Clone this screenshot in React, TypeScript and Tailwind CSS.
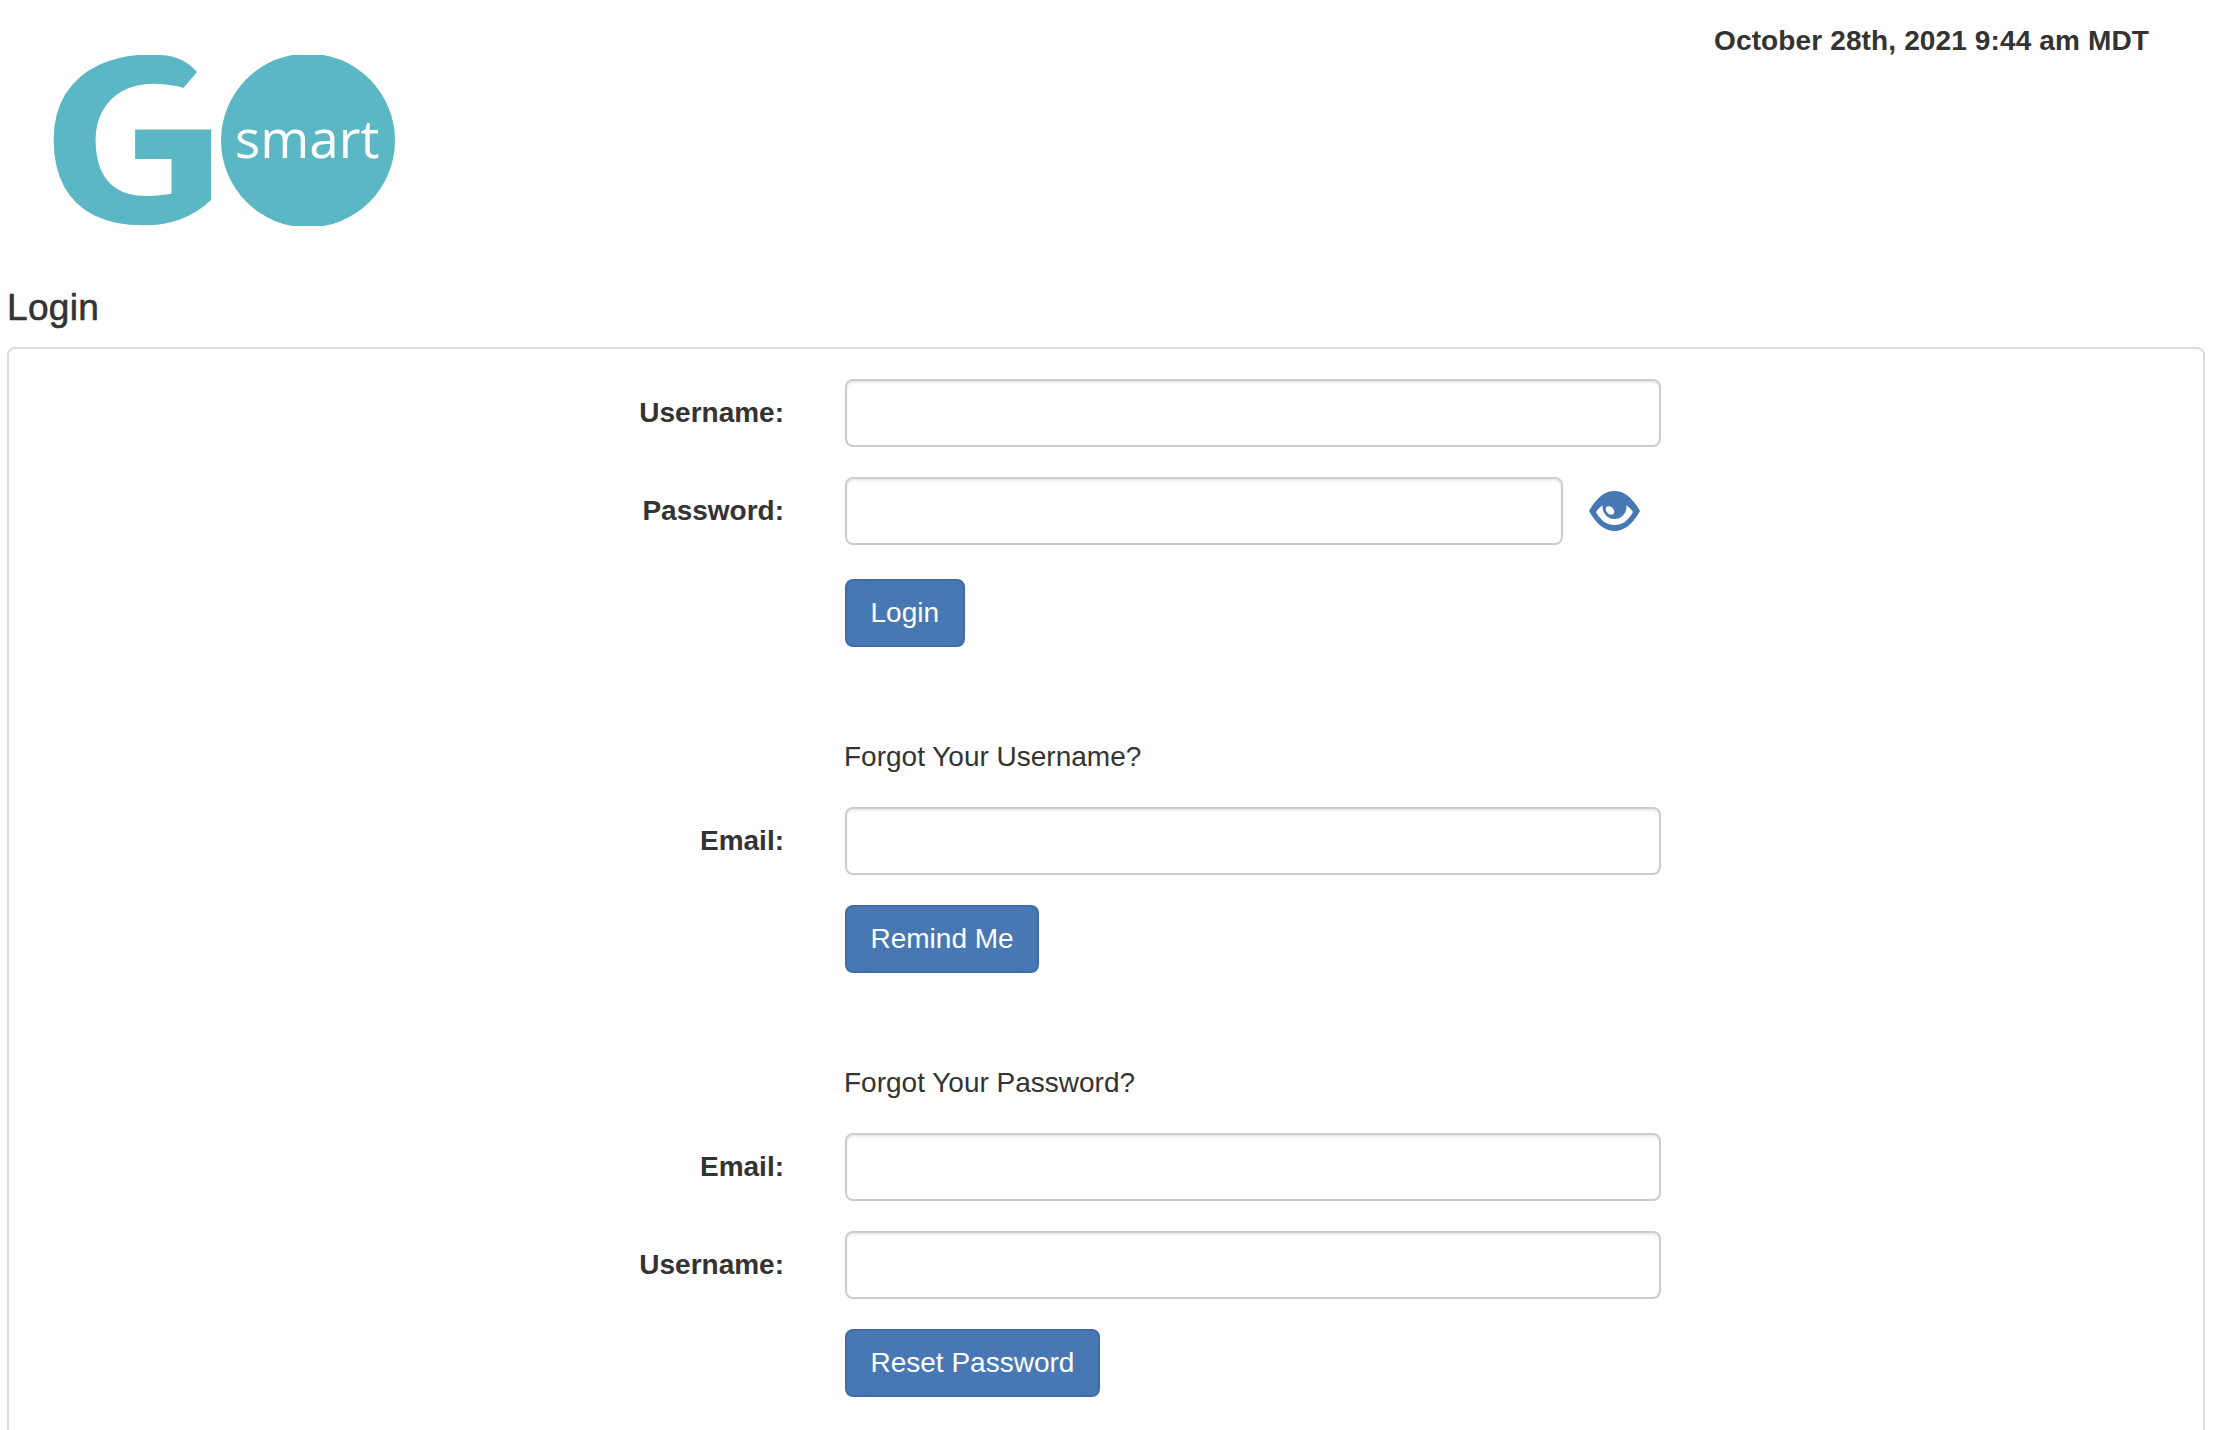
import React from 'react';

const font = { fontFamily: '"Liberation Sans", Arial, sans-serif' };

function Logo() {
  return (
    <svg width="365" height="171" viewBox="0 0 365 171" className="block">
      <defs>
        {/* trims the font's G to the logo's terminal and bottom curve */}
        <clipPath id="g-trim">
          <path d="M0 0H125Q148 0 163 17L140 44L177 60V145Q150 171 106 171H0Z" />
        </clipPath>
      </defs>
      <g clipPath="url(#g-trim)">
        <text transform="translate(4 168) scale(1.155 1)" fontFamily='"Open Sans", sans-serif' fontWeight="700" fontSize="233" fill="#5cb7c5">G</text>
      </g>
      <circle cx="274" cy="85.5" r="87" fill="#5cb7c5" />
      <text x="201" y="103" fontFamily='"Open Sans", sans-serif' fontSize="53" fill="#ffffff">smart</text>
    </svg>
  );
}

function EyeIcon() {
  return (
    <svg width="51" height="40" viewBox="0 0 51 40">
      <path d="M0 20C8 6 16 0 25.5 0S43 6 51 20C43 34 35 40 25.5 40S8 34 0 20Z" fill="#4878b4" />
      <path d="M7 21C12 14 17 11 25.5 11S39 14 44 21C39 30 33 34 25.5 34S12 30 7 21Z" fill="#ffffff" />
      <circle cx="25.5" cy="16" r="12" fill="#4878b4" />
      <ellipse cx="21" cy="19.5" rx="3.5" ry="5" transform="rotate(-45 21 19.5)" fill="#ffffff" />
    </svg>
  );
}

function Field({ label, width = 'w-[816px]', extra, mb = 'mb-[30px]' }: { label: string; width?: string; extra?: React.ReactNode; mb?: string }) {
  return (
    <div className={`flex items-center ${mb}`}>
      <label className="w-[775px] text-right text-[28px] font-bold leading-10 text-[#333]">{label}</label>
      <input className={`ml-[61px] h-[68px] ${width} rounded-lg border-2 border-[#ccc] bg-white shadow-[inset_0_2px_2px_rgba(0,0,0,0.075)] outline-none`} />
      {extra}
    </div>
  );
}

function Submit({ children, mb }: { children: React.ReactNode; mb: string }) {
  return (
    <div className={`ml-[836px] ${mb}`}>
      <button className="h-[68px] rounded-lg border-2 border-[#3f6ca8] bg-[#4878b4] px-[23.5px] text-[28px] leading-10 text-white">
        {children}
      </button>
    </div>
  );
}

function Hint({ children }: { children: React.ReactNode }) {
  return <p className="mb-[30px] ml-[835px] text-[28px] leading-10 text-[#333]">{children}</p>;
}

export default function App() {
  return (
    <div style={font} className="h-[1430px] overflow-hidden bg-white text-[#333]">
      <header className="flex items-start justify-between">
        <div className="ml-[34px] mt-[55px]">
          <Logo />
        </div>
        <div className="mr-[65px] mt-[21px] text-[28px] font-bold leading-10 tracking-[0.13px]">October 28th, 2021 9:44 am MDT</div>
      </header>

      <h3 className="ml-[7px] mt-[62px] mb-[19px] text-[37px] leading-10 tracking-[0.3px] [-webkit-text-stroke:0.6px_#333]">Login</h3>

      <div className="mx-[7px] w-[2198px] rounded-lg border-2 border-[#ddd] pt-[30px] pb-[60px]">
        <Field label="Username:" />
        <Field
          label="Password:"
          width="w-[718px]"
          mb="mb-[34px]"
          extra={
            <span className="ml-[26px] flex">
              <EyeIcon />
            </span>
          }
        />
        <Submit mb="mb-[90px]">Login</Submit>

        <Hint>Forgot Your Username?</Hint>
        <Field label="Email:" />
        <Submit mb="mb-[90px]">Remind Me</Submit>

        <Hint>Forgot Your Password?</Hint>
        <Field label="Email:" />
        <Field label="Username:" />
        <Submit mb="mb-0">Reset Password</Submit>
      </div>
    </div>
  );
}
